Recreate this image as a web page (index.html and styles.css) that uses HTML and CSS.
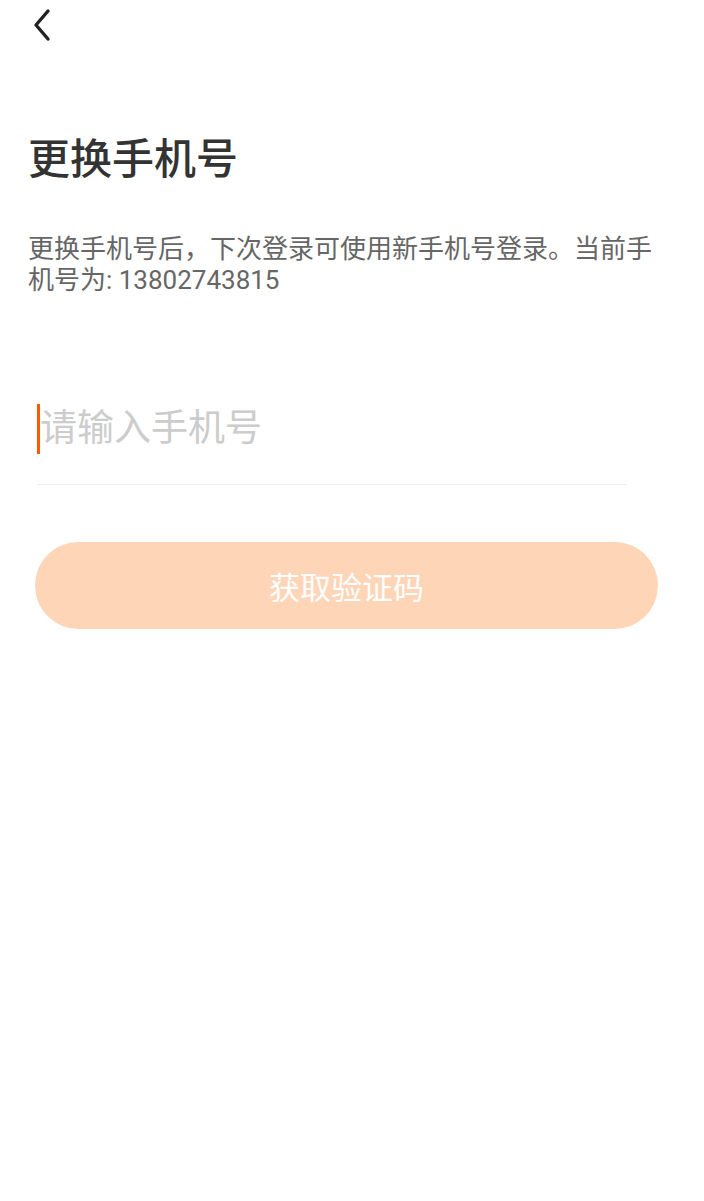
FILE: index.html
```html
<!DOCTYPE html>
<html lang="zh-CN">
<head>
  <meta charset="UTF-8" />
  <meta name="viewport" content="width=device-width, initial-scale=1.0"/>
  <title>更换手机号</title>
  <link rel="stylesheet" href="styles.css">
</head>
<body>

  <header class="nav">
    <button class="back" aria-label="返回">
      <svg width="24" height="34" viewBox="0 0 24 34">
        <path d="M18 3 L6 17 L18 31" fill="none" stroke="#222" stroke-width="3.4" stroke-linecap="round" stroke-linejoin="round"/>
      </svg>
    </button>
  </header>

  <main class="page">
    <h1 class="title">更换手机号</h1>

    <p class="desc">更换手机号后，下次登录可使用新手机号登录。当前手机号为: 13802743815</p>

    <div class="field">
      <span class="caret"></span>
      <input type="tel" class="phone" placeholder="请输入手机号" />
    </div>

    <button class="submit" disabled>获取验证码</button>
  </main>

</body>
</html>
```

FILE: styles.css
```css
:root {
  --orange: #ff5a00;
  --btn-light: #ffd5b8;
  --text: #333333;
  --muted: #666666;
  --hint: #cccccc;
  --line: #eeeeee;
}

* {
  box-sizing: border-box;
}

body {
  margin: 0;
  background: #ffffff;
  font-family: Roboto, "Noto Sans CJK SC", sans-serif;
  color: var(--text);
}

.nav {
  height: 56px;
  padding: 8px 0 0 30px;
}

.back {
  border: none;
  background: none;
  padding: 0;
  cursor: pointer;
}

.page {
  padding: 0 28px;
}

.title {
  margin: 76px 0 0;
  font-size: 42px;
  line-height: 56px;
  font-weight: 500;
  color: var(--text);
}

.desc {
  margin: 46px 0 0;
  font-size: 26px;
  line-height: 31px;
  color: var(--muted);
}

.field {
  display: flex;
  align-items: center;
  margin: 97px 49px 0 9px;
  padding: 11px 0 30px;
  border-bottom: 1px solid var(--line);
}

.caret {
  width: 3px;
  height: 50px;
  background: var(--orange);
  flex: none;
}

.phone {
  flex: 1;
  border: none;
  outline: none;
  padding: 0;
  font-family: inherit;
  font-size: 37px;
  line-height: 50px;
  height: 50px;
  color: var(--text);
  background: transparent;
}

.phone::placeholder {
  color: var(--hint);
}

.submit {
  display: block;
  width: 623px;
  height: 87px;
  margin: 57px 0 0 7px;
  border: none;
  border-radius: 44px;
  background: var(--btn-light);
  color: #ffffff;
  font-family: inherit;
  font-size: 31px;
}
```
